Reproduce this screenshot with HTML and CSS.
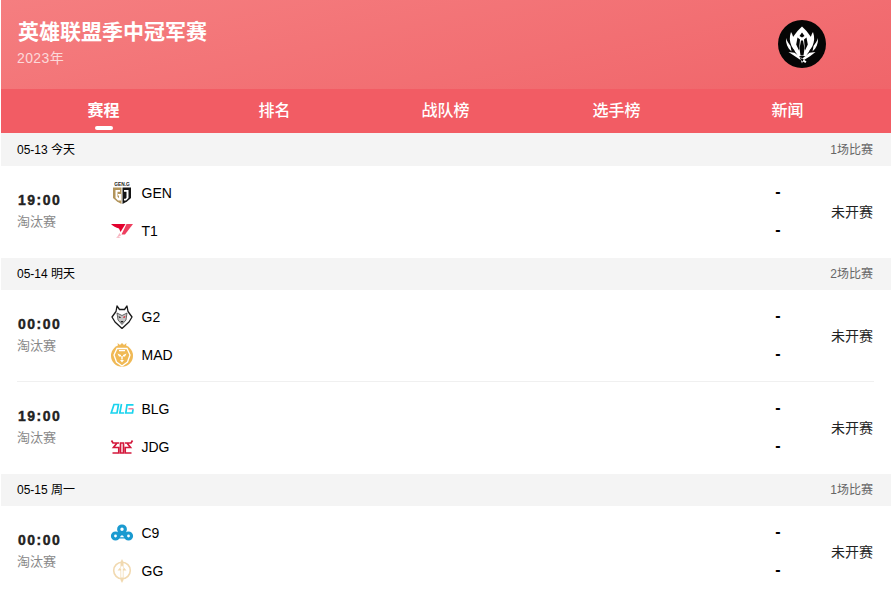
FILE: index.html
```html
<!DOCTYPE html>
<html lang="zh-CN">
<head>
<meta charset="utf-8">
<title>英雄联盟季中冠军赛</title>
<link rel="stylesheet" href="styles.css">
</head>
<body>
<div class="page">
  <header class="hero">
    <div class="hero-text">
      <h1 class="title">英雄联盟季中冠军赛</h1>
      <div class="year">2023年</div>
    </div>
    <svg class="msi-logo" viewBox="0 0 48 48" aria-hidden="true">
      <circle cx="24" cy="24" r="24" fill="#050505"/>
      <path fill="#fff" d="M24 6.500l4.500 4.500 4.500 6 .5 7-2.500 7.500-3 4.500H20l-3-4.500-2.500-7.500.5-7 4.500-6z"/>
      <path fill="#050505" d="M24 12.500l2.500 3.500-2.500 1.500-2.500-1.500zM19.500 17.500l2.500 2-1 11-2.800-6zM28.500 17.500l-2.500 2 1 11 2.800-6zM23 20.500h2l1.500 8-1 7h-3l-1-7z"/>
      <path fill="#fff" d="M13 12c-1.800 5-1.500 9.500.5 14 2 3.800 5 6.500 8.500 8.500l-1.500-3.500c-2.800-2.700-4.200-6-4.700-9.800-.4-3.300-1-6.500-2.800-9.200zM35 12c1.800 5 1.500 9.500-.5 14-2 3.800-5 6.500-8.500 8.500l1.500-3.500c2.800-2.700 4.200-6 4.700-9.800.4-3.300 1-6.500 2.800-9.200z"/>
      <path fill="#fff" d="M8 18c-.3 5.500 1.500 10 5.500 13.500l-1-5.500C10.500 23.500 9 21 8 18zM40 18c.3 5.500-1.500 10-5.500 13.500l1-5.500c2-2.500 3.500-5 4.500-8z"/>
      <path fill="#fff" d="M10.500 32l6 .8 12 8.700-1.200 1.500-5.500-3.500zM37.500 32l-6 .8-6.500 5.200 1 2 6-3.800zM21.500 36.500l2.500 7 2.500-7-2.500 2.500z"/>
    </svg>
  </header>

  <nav class="tabs">
    <a class="tab tab-active">赛程</a>
    <a class="tab">排名</a>
    <a class="tab">战队榜</a>
    <a class="tab">选手榜</a>
    <a class="tab">新闻</a>
  </nav>

  <section>
    <div class="day"><span class="day-date">05-13 今天</span><span class="day-count">1场比赛</span></div>
    <div class="match">
      <div class="when"><div class="time">19:00</div><div class="stage">淘汰赛</div></div>
      <div class="teams">
        <div class="team">
          <svg class="crest" viewBox="0 0 24 24" aria-hidden="true">
            <text x="12" y="5" text-anchor="middle" font-family="Liberation Sans" font-weight="700" font-size="4.800" fill="#222">GEN.G</text>
            <path fill="#b2945a" d="M3 6.500h8.500V23L7 20.500 3 17z"/>
            <path fill="#141414" d="M12.500 6.500H21V17l-4 3.500-4.500 2.500z"/>
            <path fill="#fff" d="M5.500 9h4.500v1.800H7.500v5l1.300 1.200h.2v-2.500H8v-1.500h3V19.500H8L5.500 17zM14 9h4.500v8l-2.500 2.500h-2V17.800h1.500l1-1V10.800H14z"/>
          </svg>
          <span class="name">GEN</span>
        </div>
        <div class="team">
          <svg class="crest" viewBox="0 0 24 24" aria-hidden="true">
            <path fill="#e2012d" d="M1 5h14.500l-5 8-1.500-3.500C6 8.500 3 7 1 5z"/>
            <path fill="#ee3f5f" d="M16.500 5H23l-8 10.500h-3.500z"/>
            <path fill="#f6b3bf" d="M9.500 14l1.500 2.500-3 1.500 3 .5-2 .5-3-.5 1.500-1z"/>
          </svg>
          <span class="name">T1</span>
        </div>
      </div>
      <div class="scores"><div class="score">-</div><div class="score">-</div></div>
      <div class="status">未开赛</div>
    </div>
  </section>

  <section>
    <div class="day"><span class="day-date">05-14 明天</span><span class="day-count">2场比赛</span></div>
    <div class="match match-split">
      <div class="when"><div class="time">00:00</div><div class="stage">淘汰赛</div></div>
      <div class="teams">
        <div class="team">
          <svg class="crest" viewBox="0 0 24 24" aria-hidden="true">
            <path fill="#fff" stroke="#1a1a1a" stroke-width="1.300" stroke-linejoin="round" d="M7 1l2.500 3.500h5L17 1l1 5.500 4 5.500-3 5-7 6.500L5 17l-3-5 4-5.500z"/>
            <path fill="#c4c4c4" stroke="#333" stroke-width=".7" d="M7 8l5 2.500L17 8l-1 7-4 4.500L8 15z"/>
            <path fill="#d3343f" d="M13.300 11.800l2.200-1-.6 2-1.600.2z"/>
            <path fill="#222" d="M8.500 11l2.300 1.200-.3.800-1.500-.3zM10.300 16h3.400L12 18z"/>
          </svg>
          <span class="name">G2</span>
        </div>
        <div class="team">
          <svg class="crest" viewBox="0 0 24 24" aria-hidden="true">
            <circle cx="12" cy="12.800" r="11" fill="#f0b955"/>
            <path fill="#f0b955" d="M7.500 0l2.500 2L12 0l2 2 2.500-2-1 5h-7z"/>
            <path fill="none" stroke="#fff" stroke-width="1.300" d="M7 5.500h10l3 6.500-2.500 7L12 23l-5.500-4L4 12z"/>
            <path fill="#fff" d="M7.500 10.500l3.500 1.500v1.500H9zM16.500 10.500L13 12v1.500h2zM10 17h4l-2 2.500zM11.300 13h1.400v3.500h-1.400zM9 7h6v1.300H9z"/>
          </svg>
          <span class="name">MAD</span>
        </div>
      </div>
      <div class="scores"><div class="score">-</div><div class="score">-</div></div>
      <div class="status">未开赛</div>
    </div>
    <div class="match">
      <div class="when"><div class="time">19:00</div><div class="stage">淘汰赛</div></div>
      <div class="teams">
        <div class="team">
          <svg class="crest" viewBox="0 0 24 24" aria-hidden="true">
            <g fill="none" stroke="#19d3ee" stroke-width="1.700">
              <path d="M4 7.500h4.500L7 16H1.200z"/>
              <path d="M11.500 7l-1.700 9h4.400"/>
              <path d="M23.500 7.800H17L15.800 16h6.700l.6-3.800"/>
            </g>
            <path fill="#f37f9e" d="M18.500 11h5l-.3 1.500h-4.900z"/>
          </svg>
          <span class="name">BLG</span>
        </div>
        <div class="team">
          <svg class="crest" viewBox="0 0 24 24" aria-hidden="true">
            <g fill="none" stroke="#d3183c" stroke-width="1.700">
              <path d="M1.500 5.500l1.500 2.500h6M7 8l-3.500 4.500h5.300v5.500H2.500"/>
              <path d="M22.500 5.500L21 8h-6M17 8l3.500 4.500h-5.300v5.500h6.300"/>
              <path d="M10.500 8h3v10h-3z"/>
            </g>
          </svg>
          <span class="name">JDG</span>
        </div>
      </div>
      <div class="scores"><div class="score">-</div><div class="score">-</div></div>
      <div class="status">未开赛</div>
    </div>
  </section>

  <section>
    <div class="day"><span class="day-date">05-15 周一</span><span class="day-count">1场比赛</span></div>
    <div class="match">
      <div class="when"><div class="time">00:00</div><div class="stage">淘汰赛</div></div>
      <div class="teams">
        <div class="team">
          <svg class="crest" viewBox="0 0 24 24" aria-hidden="true">
            <circle cx="12" cy="8.300" r="3.300" fill="none" stroke="#1a9ad0" stroke-width="3.200"/>
            <circle cx="5.500" cy="15" r="3" fill="none" stroke="#1a9ad0" stroke-width="3.200"/>
            <circle cx="18.500" cy="15" r="3" fill="none" stroke="#1a9ad0" stroke-width="3.200"/>
            <path fill="#1a9ad0" d="M8 10.500h8v7H8z"/>
            <path fill="#fff" d="M10 16.200c.5-1.200 1.200-2 2-2s1.500.8 2 2z"/>
          </svg>
          <span class="name">C9</span>
        </div>
        <div class="team">
          <svg class="crest" viewBox="0 0 24 24" aria-hidden="true">
            <circle cx="12" cy="11.500" r="8.300" fill="none" stroke="#f1d9b0" stroke-width="1.600"/>
            <path fill="#f1d9b0" d="M12 0l1.500 3v5l3 3.500h-3V21L12 24l-1.500-3v-9.500h-3l3-3.500V3z"/>
            <path fill="#fff" d="M12 6.500l2 3h-1.200v9h-1.600v-9H10z"/>
          </svg>
          <span class="name">GG</span>
        </div>
      </div>
      <div class="scores"><div class="score">-</div><div class="score">-</div></div>
      <div class="status">未开赛</div>
    </div>
  </section>
</div>
</body>
</html>
```

FILE: styles.css
```css
* {
  box-sizing: border-box;
}

html,
body {
  margin: 0;
  padding: 0;
  background: #fff;
}

body {
  height: 598px;
  overflow: hidden;
  font-family: "Liberation Sans", "Noto Sans CJK SC", sans-serif;
  color: #000;
}

.page {
  padding-left: 1px;
}

.hero {
  height: 89px;
  display: flex;
  justify-content: space-between;
  align-items: flex-start;
  padding: 20px 65px 0 17px;
  background: linear-gradient(168deg, #f57e80 0%, #f0656a 100%);
}

.title {
  margin: 0;
  font-size: 21px;
  line-height: 24px;
  font-weight: 700;
  color: #fff;
}

.year {
  margin-top: 4px;
  margin-left: -1px;
  font-size: 14px;
  line-height: 20px;
  letter-spacing: 0.4px;
  color: rgba(255, 255, 255, 0.72);
}

.msi-logo {
  width: 48px;
  height: 48px;
  flex: none;
}

.tabs {
  height: 44px;
  display: flex;
  padding: 0 18px 0 17px;
  background: #f25c64;
}

.tab {
  flex: 1;
  position: relative;
  text-align: center;
  font-size: 16px;
  line-height: 43px;
  font-weight: 500;
  color: #fff;
}

.tab-active {
  font-weight: 700;
}

.tab-active::after {
  content: "";
  position: absolute;
  left: 50%;
  bottom: 3px;
  width: 18px;
  height: 4px;
  margin-left: -9px;
  border-radius: 2px;
  background: #fff;
}

.day {
  height: 33px;
  display: flex;
  justify-content: space-between;
  align-items: center;
  padding: 0 18px 2px 16px;
  background: #f4f4f4;
  font-size: 12px;
}

.day-count {
  color: #666;
}

section + section .day {
  height: 32px;
  padding-bottom: 3px;
}

.match {
  display: flex;
  height: 92px;
  margin: 0 17px 0 16px;
  padding: 8px 1px 8px 0;
}

.match-split {
  border-bottom: 1px solid #f0f0f0;
  padding-bottom: 7px;
}

.when {
  width: 93px;
  flex: none;
  padding-top: 16px;
}

.time {
  padding-left: 1px;
  font-size: 14px;
  line-height: 20px;
  font-weight: 700;
  letter-spacing: 1.5px;
  -webkit-text-stroke: 0.4px #222;
  color: #222;
}

.stage {
  margin-top: 2px;
  font-size: 13px;
  line-height: 20px;
  color: #888;
}

.teams {
  flex: 1;
}

.team {
  height: 38px;
  display: flex;
  align-items: center;
  gap: 7.5px;
}

.crest {
  width: 24px;
  height: 24px;
  flex: none;
}

.name {
  font-size: 14px;
  line-height: 20px;
}

.scores {
  width: 24px;
  flex: none;
  margin-right: 41px;
  text-align: center;
}

.score {
  height: 38px;
  font-size: 16px;
  line-height: 36px;
  font-weight: 700;
}

.status {
  width: 42px;
  flex: none;
  align-self: center;
  font-size: 14px;
  line-height: 20px;
  text-align: right;
  color: #222;
  white-space: nowrap;
}
```
